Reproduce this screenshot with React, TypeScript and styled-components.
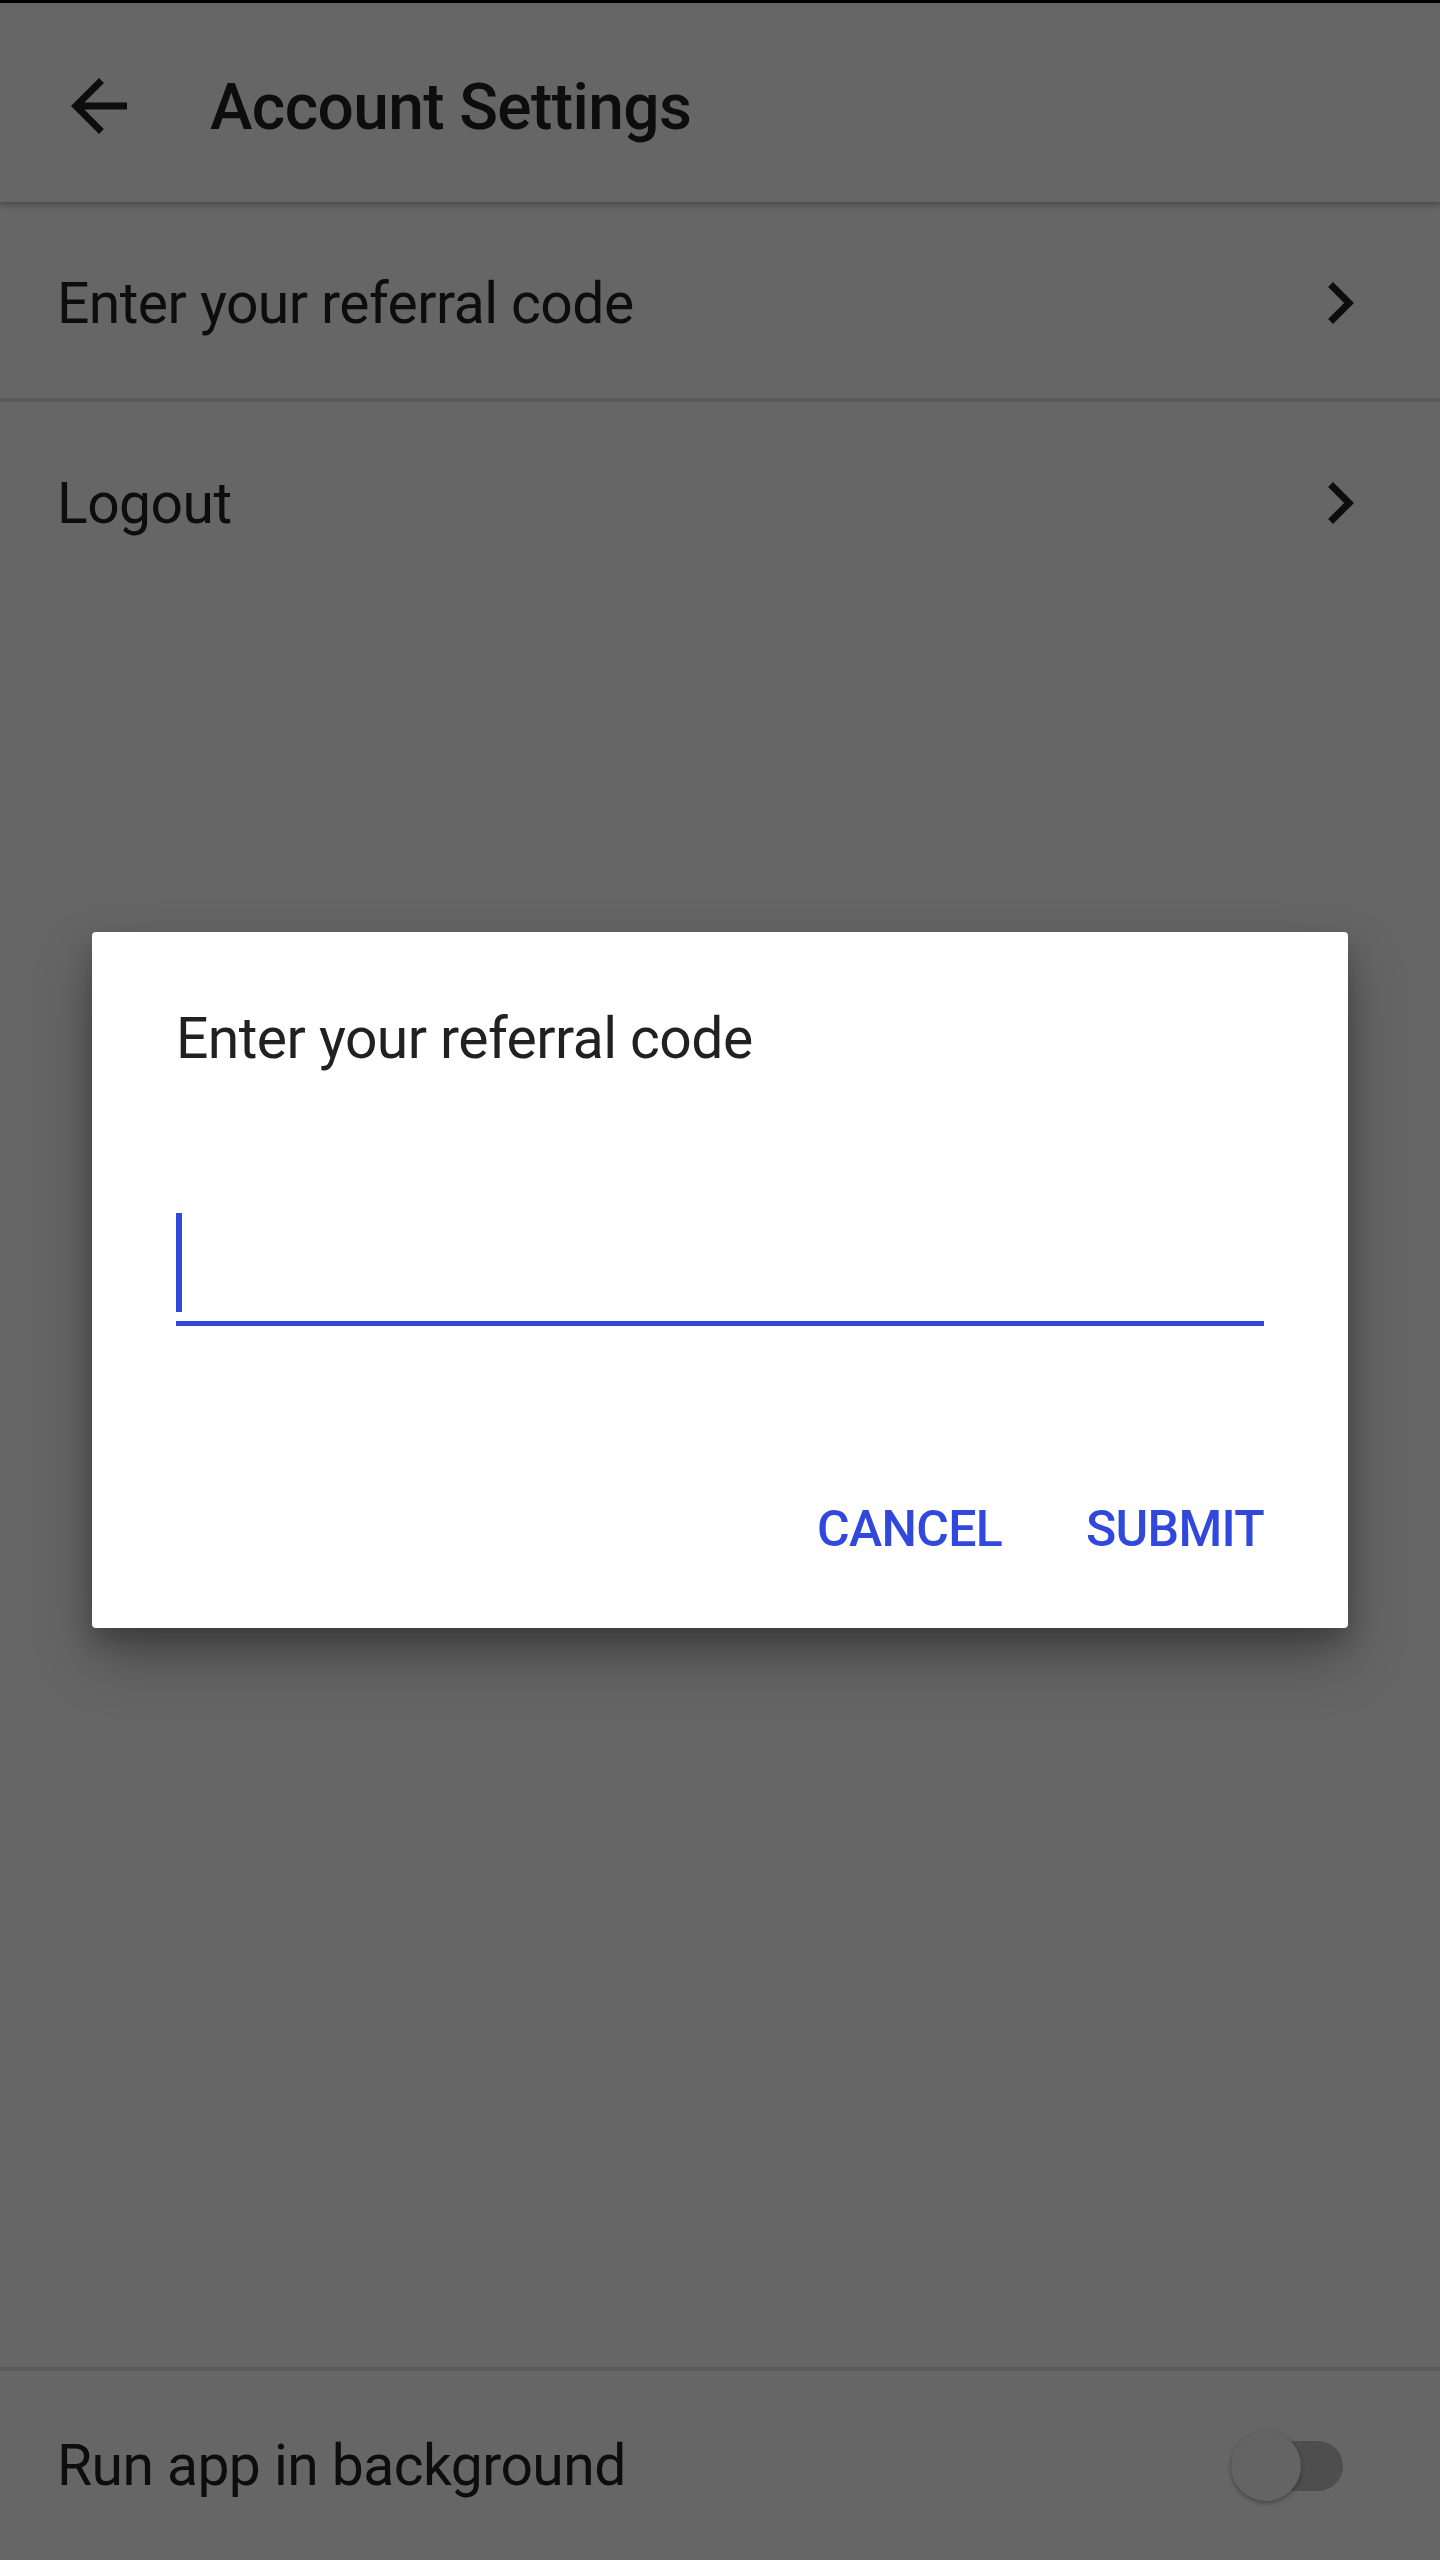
import React from "react";
import styled, { createGlobalStyle } from "styled-components";

const GlobalStyle = createGlobalStyle`
  html, body {
    margin: 0;
    padding: 0;
  }
  body {
    font-family: Roboto, "Noto Sans", "Liberation Sans", sans-serif;
    background: #ffffff;
  }
  * { box-sizing: border-box; }
`;

const ACCENT = "#3048dc";

const Screen = styled.div`
  position: relative;
  width: 1440px;
  height: 2560px;
  display: flex;
  flex-direction: column;
  background: #ffffff;
  overflow: hidden;
`;

const StatusStrip = styled.div`
  height: 3px;
  background: #000000;
  flex-shrink: 0;
`;

const TopBar = styled.header`
  position: relative;
  z-index: 1;
  height: 199px;
  flex-shrink: 0;
  display: flex;
  align-items: center;
  padding: 6px 0 0 57px;
  background: #ffffff;
  box-shadow: 0 3px 6px rgba(0, 0, 0, 0.28);
`;

const IconButton = styled.button`
  width: 84px;
  height: 84px;
  padding: 0;
  border: none;
  background: transparent;
  display: flex;
  align-items: center;
  justify-content: center;
  color: #212121;
`;

const Title = styled.h1`
  margin: 3px 0 0 69px;
  font-size: 64px;
  font-weight: 500;
  color: #212121;
  letter-spacing: -0.6px;
`;

const List = styled.div`
  margin-top: 6px;
  display: flex;
  flex-direction: column;
`;

const Row = styled.div<{ $divider?: boolean; $height: number }>`
  height: ${(p) => p.$height}px;
  display: flex;
  align-items: center;
  justify-content: space-between;
  padding: 0 58px 0 57px;
  border-bottom: ${(p) => (p.$divider ? "4px solid #e4e4e4" : "none")};
  flex-shrink: 0;
`;

const RowLabel = styled.span`
  font-size: 57px;
  letter-spacing: -0.55px;
  color: #222222;
`;

const Chevron = styled.span`
  width: 84px;
  height: 84px;
  display: flex;
  align-items: center;
  justify-content: center;
  color: #222222;
`;

const Spacer = styled.div`
  flex: 1;
`;

const BottomRow = styled(Row)`
  border-top: 4px solid #e4e4e4;
  padding-right: 97px;
`;

const Switch = styled.span`
  position: relative;
  width: 112px;
  height: 70px;
  display: flex;
  align-items: center;
`;

const SwitchTrack = styled.span`
  width: 112px;
  height: 50px;
  border-radius: 25px;
  background: #c4c4c4;
`;

const SwitchThumb = styled.span`
  position: absolute;
  left: 0;
  top: 0;
  width: 70px;
  height: 70px;
  border-radius: 50%;
  background: #fafafa;
  box-shadow: 0 2px 5px rgba(0, 0, 0, 0.35);
`;

const Scrim = styled.div`
  position: absolute;
  inset: 0;
  z-index: 5;
  background: rgba(0, 0, 0, 0.6);
  display: flex;
  align-items: center;
  justify-content: center;
`;

const Dialog = styled.div`
  width: 1256px;
  background: #ffffff;
  border-radius: 4px;
  padding: 72px 84px 69px;
  display: flex;
  flex-direction: column;
  box-shadow: 0 30px 60px rgba(0, 0, 0, 0.3), 0 12px 24px rgba(0, 0, 0, 0.2);
`;

const DialogTitle = styled.h2`
  margin: 0;
  font-size: 57px;
  line-height: 70px;
  letter-spacing: -0.55px;
  font-weight: 400;
  color: #212121;
`;

const Field = styled.div`
  margin-top: 139px;
  padding-bottom: 9px;
  border-bottom: 5px solid ${ACCENT};
  display: flex;
`;

const Caret = styled.span`
  width: 6px;
  height: 99px;
  background: ${ACCENT};
`;

const Actions = styled.div`
  margin-top: 173px;
  display: flex;
  justify-content: flex-end;
  gap: 84px;
`;

const ActionButton = styled.button`
  padding: 0;
  border: none;
  background: transparent;
  font-family: Roboto, "Noto Sans", "Liberation Sans", sans-serif;
  font-size: 50px;
  line-height: 60px;
  letter-spacing: -0.7px;
  font-weight: 500;
  color: ${ACCENT};
  text-transform: uppercase;
`;

const BackArrow = () => (
  <svg width="84" height="84" viewBox="0 0 24 24" fill="currentColor">
    <path d="M20 11H7.83l5.59-5.59L12 4l-8 8 8 8 1.41-1.41L7.83 13H20v-2z" />
  </svg>
);

const ChevronRight = () => (
  <svg width="84" height="84" viewBox="0 0 24 24" fill="currentColor">
    <path d="M10 6L8.59 7.41 13.17 12l-4.58 4.59L10 18l6-6z" />
  </svg>
);

export default function App() {
  return (
    <>
      <GlobalStyle />
      <Screen>
        <StatusStrip />
        <TopBar>
          <IconButton aria-label="Back">
            <BackArrow />
          </IconButton>
          <Title>Account Settings</Title>
        </TopBar>
        <List>
          <Row $divider $height={194}>
            <RowLabel>Enter your referral code</RowLabel>
            <Chevron>
              <ChevronRight />
            </Chevron>
          </Row>
          <Row $height={202}>
            <RowLabel>Logout</RowLabel>
            <Chevron>
              <ChevronRight />
            </Chevron>
          </Row>
        </List>
        <Spacer />
        <BottomRow $height={193}>
          <RowLabel>Run app in background</RowLabel>
          <Switch>
            <SwitchTrack />
            <SwitchThumb />
          </Switch>
        </BottomRow>
        <Scrim>
          <Dialog role="dialog">
            <DialogTitle>Enter your referral code</DialogTitle>
            <Field>
              <Caret />
            </Field>
            <Actions>
              <ActionButton>Cancel</ActionButton>
              <ActionButton>Submit</ActionButton>
            </Actions>
          </Dialog>
        </Scrim>
      </Screen>
    </>
  );
}
